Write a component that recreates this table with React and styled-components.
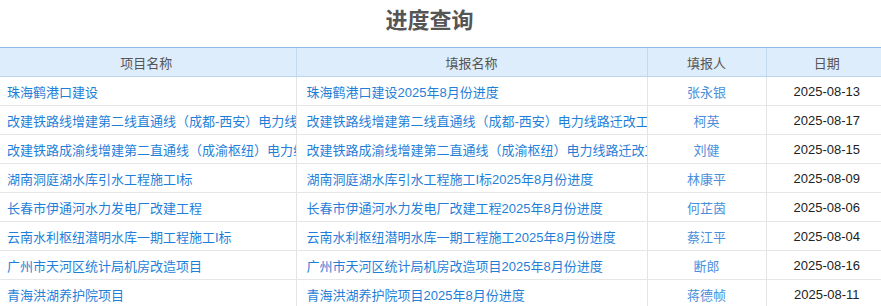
import styled, { createGlobalStyle } from 'styled-components';

const rows = [
  ['珠海鹤港口建设', '珠海鹤港口建设2025年8月份进度', '张永银', '2025-08-13'],
  ['改建铁路线增建第二线直通线（成都-西安）电力线路迁改工程', '改建铁路线增建第二线直通线（成都-西安）电力线路迁改工程2025年8月份进度', '柯英', '2025-08-17'],
  ['改建铁路成渝线增建第二直通线（成渝枢纽）电力线路迁改工程', '改建铁路成渝线增建第二直通线（成渝枢纽）电力线路迁改工程2025年8月份进度', '刘健', '2025-08-15'],
  ['湖南洞庭湖水库引水工程施工I标', '湖南洞庭湖水库引水工程施工I标2025年8月份进度', '林康平', '2025-08-09'],
  ['长春市伊通河水力发电厂改建工程', '长春市伊通河水力发电厂改建工程2025年8月份进度', '何芷茵', '2025-08-06'],
  ['云南水利枢纽潜明水库一期工程施工I标', '云南水利枢纽潜明水库一期工程施工2025年8月份进度', '蔡江平', '2025-08-04'],
  ['广州市天河区统计局机房改造项目', '广州市天河区统计局机房改造项目2025年8月份进度', '断郎', '2025-08-16'],
  ['青海洪湖养护院项目', '青海洪湖养护院项目2025年8月份进度', '蒋德帧', '2025-08-11'],
];

const columns = [
  { label: '项目名称', width: 299 },
  { label: '填报名称', width: 351 },
  { label: '填报人', width: 119 },
  { label: '日期', width: 121 },
];

const App = () => {
  return (
    <>
      <GlobalStyle />
      <Page>
        <Title>进度查询</Title>
        <Table>
          <colgroup>
            {columns.map((col) => (
              <col key={col.label} style={{ width: col.width }} />
            ))}
          </colgroup>
          <thead>
            <tr>
              {columns.map((col) => (
                <Th key={col.label}>{col.label}</Th>
              ))}
            </tr>
          </thead>
          <tbody>
            {rows.map(([project, report, person, date]) => (
              <tr key={report}>
                <Td>
                  <Link>{project}</Link>
                </Td>
                <Td>
                  <Link>{report}</Link>
                </Td>
                <Td $center>
                  <Person>{person}</Person>
                </Td>
                <Td $center $dark>
                  {date}
                </Td>
              </tr>
            ))}
          </tbody>
        </Table>
      </Page>
    </>
  );
};

const GlobalStyle = createGlobalStyle`
  body {
    margin: 0;
    background: #fff;
    font-family: "Liberation Sans", "Noto Sans CJK SC", sans-serif;
    overflow: hidden;
  }
`;

const Page = styled.div`
  width: 890px;
  margin-left: -3px;
`;

const Title = styled.h1`
  margin: 0;
  padding-right: 25px;
  height: 47px;
  line-height: 42px;
  text-align: center;
  font-size: 22px;
  font-weight: bold;
  color: #555;
`;

const Table = styled.table`
  width: 890px;
  table-layout: fixed;
  border-collapse: collapse;
  font-size: 13px;
`;

const Th = styled.th`
  height: 28px;
  padding: 0 10px;
  background: #deedfb;
  border-top: 1px solid #8fbbe5;
  border-bottom: 1px solid #b9d5ef;
  border-left: 1px solid #c3dbf1;
  font-weight: normal;
  color: #555;
  text-align: center;
  &:first-child {
    border-left: none;
  }
`;

const Td = styled.td`
  height: 28px;
  padding: 0 10px;
  border-bottom: 1px solid #e6e6e6;
  border-left: 1px solid #e4e4e4;
  white-space: nowrap;
  overflow: hidden;
  text-overflow: clip;
  text-align: ${({ $center }) => ($center ? 'center' : 'left')};
  color: ${({ $dark }) => ($dark ? '#222' : 'inherit')};
  &:first-child {
    border-left: none;
  }
`;

const Link = styled.span`
  color: #1f7fd8;
`;

const Person = styled.span`
  color: #4a8fdc;
`;

export default App;
